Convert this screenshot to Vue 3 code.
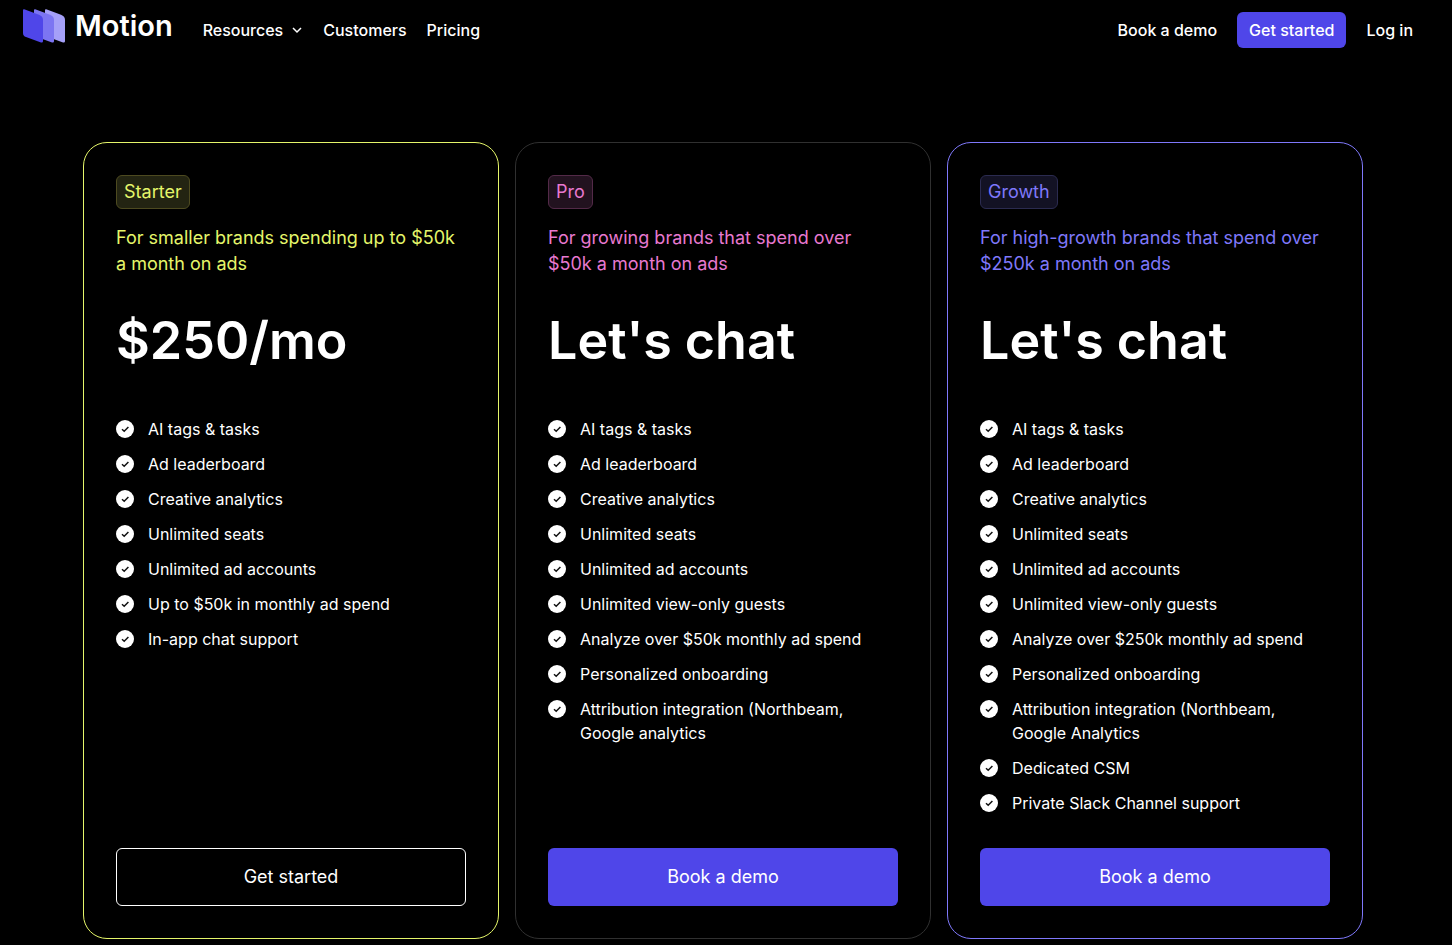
<template>
  <div class="page">
    <header class="header">
      <a href="#" class="logo">
        <svg class="logo-mark" viewBox="0 0 42 34" aria-hidden="true">
          <path d="M22 1.2Q22 0 23.200 .3L38 5.800Q42 7.300 42 11V32.200Q42 34 40 33.500L25 28Q22 27 22 24Z" fill="#a5a0f8" />
          <path d="M11 1.200Q11 0 12.200 .3L27 5.800Q31 7.300 31 11V32.200Q31 34 29 33.500L14 28Q11 27 11 24Z" fill="#7c75f2" />
          <path d="M0 1.200Q0 0 1.200 .3L16 5.800Q20 7.300 20 11V32.200Q20 34 18 33.500L3 28Q0 27 0 24Z" fill="#4f46e9" />
        </svg>
        <span class="logo-text">Motion</span>
      </a>

      <nav class="nav">
        <button type="button" class="nav-item nav-dropdown">
          Resources
          <svg class="chevron" viewBox="0 0 12 12" aria-hidden="true">
            <path d="M2 4l4 4 4-4" />
          </svg>
        </button>
        <a href="#" class="nav-item">Customers</a>
        <a href="#" class="nav-item">Pricing</a>
      </nav>

      <div class="actions">
        <a href="#" class="nav-item">Book a demo</a>
        <button type="button" class="btn-small">Get started</button>
        <a href="#" class="nav-item">Log in</a>
      </div>
    </header>

    <main class="pricing">
      <section v-for="plan in plans" :key="plan.name" class="card" :class="plan.theme">
        <h2 class="badge">{{ plan.name }}</h2>
        <p class="description">{{ plan.description }}</p>
        <p class="price">{{ plan.price }}</p>
        <ul class="features">
          <li v-for="feature in plan.features" :key="feature" class="feature">
            <svg class="check" viewBox="0 0 18 18" aria-hidden="true">
              <circle cx="9" cy="9" r="9" fill="#fff" />
              <path d="M6 9.200l2.200 2 4.200-4.200" />
            </svg>
            <span>{{ feature }}</span>
          </li>
        </ul>
        <button type="button" class="btn" :class="{ outline: plan.outline }">{{ plan.cta }}</button>
      </section>
    </main>
  </div>
</template>

<script setup>
const baseFeatures = [
  'AI tags & tasks',
  'Ad leaderboard',
  'Creative analytics',
  'Unlimited seats',
  'Unlimited ad accounts'
]

const plans = [
  {
    name: 'Starter',
    theme: 'starter',
    description: 'For smaller brands spending up to $50k a month on ads',
    price: '$250/mo',
    features: [...baseFeatures, 'Up to $50k in monthly ad spend', 'In-app chat support'],
    cta: 'Get started',
    outline: true
  },
  {
    name: 'Pro',
    theme: 'pro',
    description: 'For growing brands that spend over $50k a month on ads',
    price: "Let's chat",
    features: [
      ...baseFeatures,
      'Unlimited view-only guests',
      'Analyze over $50k monthly ad spend',
      'Personalized onboarding',
      'Attribution integration (Northbeam, Google analytics'
    ],
    cta: 'Book a demo'
  },
  {
    name: 'Growth',
    theme: 'growth',
    description: 'For high-growth brands that spend over $250k a month on ads',
    price: "Let's chat",
    features: [
      ...baseFeatures,
      'Unlimited view-only guests',
      'Analyze over $250k monthly ad spend',
      'Personalized onboarding',
      'Attribution integration (Northbeam, Google Analytics',
      'Dedicated CSM',
      'Private Slack Channel support'
    ],
    cta: 'Book a demo'
  }
]
</script>

<style>
body {
  margin: 0;
  background: #000;
}
</style>

<style scoped>
.page {
  color: #fff;
  font-family: Inter, sans-serif;
  font-size: 16px;
  line-height: 24px;
}

button {
  font: inherit;
  color: inherit;
  border: 0;
  background: none;
  padding: 0;
  cursor: pointer;
}

a {
  color: inherit;
  text-decoration: none;
}

.header {
  display: flex;
  align-items: center;
  height: 60px;
  padding: 0 39px 0 23px;
}

.logo {
  display: flex;
  align-items: center;
  gap: 10px;
  margin-bottom: 8px;
}

.logo-mark {
  width: 42px;
  height: 34px;
}

.logo-text {
  font-size: 29px;
  font-weight: 600;
  line-height: 34px;
}

.nav,
.actions {
  display: flex;
  align-items: center;
  gap: 20px;
}

.nav {
  margin-left: 30px;
}

.actions {
  margin-left: auto;
}

.nav-item,
.btn-small {
  font-weight: 500;
  white-space: nowrap;
}

.nav-dropdown {
  display: flex;
  align-items: center;
  gap: 8px;
}

.chevron {
  width: 12px;
  height: 12px;
  fill: none;
  stroke: #fff;
  stroke-width: 1.5;
}

.btn-small {
  padding: 6px 12px;
  border-radius: 6px;
  background: #4f46e9;
}

.pricing {
  display: grid;
  grid-template-columns: repeat(3, minmax(0, 1fr));
  gap: 16px;
  max-width: 1280px;
  margin: 0 auto;
  padding: 82px 6px 6px 0;
}

.card {
  display: flex;
  flex-direction: column;
  align-items: flex-start;
  padding: 32px;
  border: 1px solid #303030;
  border-radius: 24px;
}

.badge {
  margin: 0;
  padding: 3px 7px;
  border: 1px solid;
  border-radius: 6px;
  font-size: 18px;
  font-weight: 400;
  line-height: 26px;
}

.description {
  margin: 16px 0 0;
  font-size: 18px;
  line-height: 26px;
}

.price {
  margin: 32px 0 0;
  font-size: 52px;
  font-weight: 600;
  line-height: 64px;
}

.starter {
  border-color: #e5f66a;
}

.starter .badge,
.starter .description {
  color: #e5f66a;
}

.starter .badge {
  background: #232412;
  border-color: #4d4a20;
}

.pro .badge,
.pro .description {
  color: #e879d0;
}

.pro .badge {
  background: #22121f;
  border-color: #532a48;
}

.growth {
  border-color: #7f78fa;
}

.growth .badge,
.growth .description {
  color: #7f78fa;
}

.growth .badge {
  background: #131224;
  border-color: #2b2b50;
}

.features {
  display: flex;
  flex-direction: column;
  gap: 11px;
  margin: 44px 0 33px;
  padding: 0;
  list-style: none;
}

.feature {
  display: flex;
  gap: 14px;
}

.check {
  flex: none;
  width: 18px;
  height: 18px;
  margin-top: 3px;
}

.check path {
  fill: none;
  stroke: #111;
  stroke-width: 1.5;
}

.btn {
  width: 100%;
  margin-top: auto;
  padding: 16px;
  border-radius: 6px;
  background: #4f46e9;
  font-size: 18px;
  line-height: 26px;
}

.btn.outline {
  padding: 15px;
  border: 1px solid #fff;
  background: none;
}
</style>
